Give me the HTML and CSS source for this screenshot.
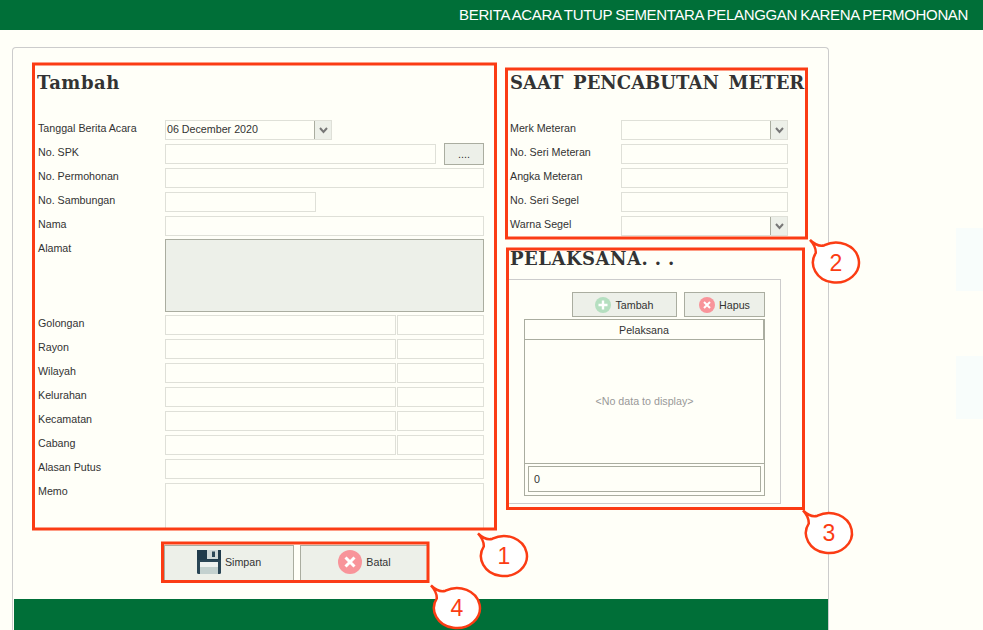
FILE: index.html
```html
<!DOCTYPE html>
<html lang="en">
<head>
  <meta charset="UTF-8" />
  <title>Berita Acara Tutup Sementara</title>
  <link rel="stylesheet" href="styles.css">
</head>
<body>

  <svg class="defs" width="0" height="0">
    <symbol id="icon-add" viewBox="0 0 16 16">
      <circle cx="8" cy="8" r="8" fill="#b5dfc0"/>
      <path d="M8 3.5v9M3.5 8h9" stroke="#fff" stroke-width="2.4"/>
    </symbol>
    <symbol id="icon-del" viewBox="0 0 16 16">
      <circle cx="8" cy="8" r="8" fill="#f8949a"/>
      <path d="M5 5l6 6M11 5l-6 6" stroke="#fff" stroke-width="2"/>
    </symbol>
    <symbol id="icon-arrow" viewBox="0 0 9 7">
      <path d="M1 1l3.5 4L8 1" fill="none" stroke="#777" stroke-width="2"/>
    </symbol>
    <symbol id="callout" viewBox="-30 -26 56 50" overflow="visible">
      <path d="M-26 -22.5Q-18 -15 -11.5 -17.3A23 20 0 1 1 -20.2 -9.6Q-20 -16 -26 -22.5Z" fill="#fff" stroke="#fb3c14" stroke-width="2.5"/>
    </symbol>
  </svg>

  <div class="topbar">BERITA ACARA TUTUP SEMENTARA PELANGGAN KARENA PERMOHONAN</div>

  <div class="panel">
    <div class="columns">

      <div class="col-left">
        <h2 class="title">Tambah</h2>
        <div class="row"><label>Tanggal Berita Acara</label>
          <div class="field combo w-date"><span class="value">06 December 2020</span><span class="arrow"><svg width="9" height="7"><use href="#icon-arrow"/></svg></span></div>
        </div>
        <div class="row"><label>No. SPK</label>
          <div class="field w-spk"></div>
          <button class="btn btn-dots">....</button>
        </div>
        <div class="row"><label>No. Permohonan</label><div class="field grow"></div></div>
        <div class="row"><label>No. Sambungan</label><div class="field w-samb"></div></div>
        <div class="row"><label>Nama</label><div class="field grow"></div></div>
        <div class="row row-alamat"><label>Alamat</label><div class="field grow readonly"></div></div>
        <div class="row"><label>Golongan</label><div class="field w-code"></div><div class="field w-name"></div></div>
        <div class="row"><label>Rayon</label><div class="field w-code"></div><div class="field w-name"></div></div>
        <div class="row"><label>Wilayah</label><div class="field w-code"></div><div class="field w-name"></div></div>
        <div class="row"><label>Kelurahan</label><div class="field w-code"></div><div class="field w-name"></div></div>
        <div class="row"><label>Kecamatan</label><div class="field w-code"></div><div class="field w-name"></div></div>
        <div class="row"><label>Cabang</label><div class="field w-code"></div><div class="field w-name"></div></div>
        <div class="row"><label>Alasan Putus</label><div class="field grow"></div></div>
        <div class="row row-memo"><label>Memo</label><div class="field grow"></div></div>
      </div>

      <div class="col-right">
        <h2 class="title title-wide">SAAT PENCABUTAN METER</h2>
        <div class="row row-r"><label>Merk Meteran</label>
          <div class="field combo w-r"><span class="value"></span><span class="arrow"><svg width="9" height="7"><use href="#icon-arrow"/></svg></span></div>
        </div>
        <div class="row row-r"><label>No. Seri Meteran</label><div class="field w-r"></div></div>
        <div class="row row-r"><label>Angka Meteran</label><div class="field w-r"></div></div>
        <div class="row row-r"><label>No. Seri Segel</label><div class="field w-r"></div></div>
        <div class="row row-r"><label>Warna Segel</label>
          <div class="field combo w-r"><span class="value"></span><span class="arrow"><svg width="9" height="7"><use href="#icon-arrow"/></svg></span></div>
        </div>

        <h2 class="title title-sub">PELAKSANA<span class="dots">...</span></h2>
        <div class="group">
          <div class="toolbar">
            <button class="btn btn-tambah"><svg width="16" height="16"><use href="#icon-add"/></svg>Tambah</button>
            <button class="btn btn-hapus"><svg width="16" height="16"><use href="#icon-del"/></svg>Hapus</button>
          </div>
          <div class="grid">
            <div class="grid-head">Pelaksana</div>
            <div class="grid-body">&lt;No data to display&gt;</div>
            <div class="grid-foot"><div class="grid-total">0</div></div>
          </div>
        </div>
      </div>

    </div>

    <div class="actions">
      <button class="btn btn-big btn-simpan">
        <svg width="24" height="24" viewBox="0 0 24 24">
          <rect width="24" height="24" rx="1.5" fill="#2a4656"/>
          <path d="M0 0h24v10H0z" fill="#1f3a4b"/>
          <rect x="10" y="0" width="11" height="9" fill="#cfd8d8"/>
          <rect x="15" y="1.500" width="3" height="5.500" fill="#2a4656"/>
          <rect x="3" y="12" width="18" height="5" fill="#eef2f0"/>
          <rect x="3" y="17" width="18" height="7" fill="#c3d1cf"/>
        </svg>Simpan
      </button>
      <button class="btn btn-big btn-batal"><svg width="24" height="24"><use href="#icon-del"/></svg>Batal</button>
    </div>

    <div class="footer"></div>
  </div>

  <div class="patch patch-a"></div>
  <div class="patch patch-b"></div>

  <!-- annotations drawn over the screenshot -->
  <svg class="notes" width="983" height="630">
    <rect class="mark" x="33.500" y="64" width="462" height="465"/>
    <rect class="mark" x="506.500" y="69" width="300" height="169"/>
    <rect class="mark" x="507.500" y="249" width="296" height="259.500"/>
    <rect class="mark" x="162.500" y="543" width="265.500" height="38.500"/>
    <g transform="translate(504 556)"><use href="#callout" x="-30" y="-26" width="56" height="50"/><text class="num" y="8">1</text></g>
    <g transform="translate(836 262.500)"><use href="#callout" x="-30" y="-26" width="56" height="50"/><text class="num" y="8">2</text></g>
    <g transform="translate(829 533)"><use href="#callout" x="-30" y="-26" width="56" height="50"/><text class="num" y="8">3</text></g>
    <g transform="translate(457 608)"><use href="#callout" x="-30" y="-26" width="56" height="50"/><text class="num" y="8">4</text></g>
  </svg>

</body>
</html>
```

FILE: styles.css
```css
:root {
  --bg: #fffff8;
  --green: #006f38;
  --line: #dfe0d8;
  --line-dark: #aaada0;
  --fill: #edf0e9;
  --text: #333;
}

html, body {
  height: 630px;
  overflow: hidden;
}

body {
  margin: 0;
  background: var(--bg);
  color: var(--text);
  font-family: 'Liberation Sans', Arial, sans-serif;
  font-size: 10.7px;
  position: relative;
}

.defs {
  position: absolute;
}

.topbar {
  height: 30px;
  line-height: 29px;
  padding-right: 15px;
  background: var(--green);
  color: #fff;
  font-size: 15px;
  letter-spacing: -0.35px;
  word-spacing: -0.5px;
  text-align: right;
}

.panel {
  margin: 17px 0 0 12px;
  width: 815px;
  height: 583px;
  border: 1px solid #ccc;
  border-bottom: none;
  border-radius: 4px 4px 0 0;
}

.columns {
  display: flex;
  padding: 22px 0 0 24px;
}

.col-left {
  width: 447px;
  height: 458px;
  overflow: hidden;
  margin-right: 26px;
}

.col-right {
  width: 300px;
}

.title {
  margin: 0 0 26px;
  height: 24px;
  line-height: 25px;
  font-family: 'DejaVu Serif', 'Liberation Serif', serif;
  font-size: 18px;
  font-weight: bold;
  letter-spacing: 0.5px;
  color: var(--text);
}

.title-wide {
  white-space: nowrap;
  letter-spacing: 0;
  word-spacing: 3.5px;
}

.title-sub {
  margin: 12px 0 9px;
  height: 22px;
  line-height: 22px;
}

.dots {
  letter-spacing: 7px;
}

.row {
  display: flex;
  height: 20px;
  margin-bottom: 4px;
}

.row label {
  width: 128px;
  padding-left: 1px;
  line-height: 17px;
  flex: none;
  box-sizing: border-box;
}

.row-r label {
  width: 111px;
  padding-left: 0;
}

.row-alamat {
  height: 73px;
  margin: -1px 0 3px;
}

.row-alamat label {
  padding-top: 1px;
}

.row-memo {
  height: 60px;
}

.field {
  box-sizing: border-box;
  border: 1px solid var(--line);
  height: 100%;
  flex: none;
}

.grow {
  flex: 1;
}

.readonly {
  background: var(--fill);
  border-color: var(--line-dark);
}

.w-date { width: 167px; }
.w-spk { width: 271px; }
.w-samb { width: 151px; }
.w-code { width: 231px; margin-right: 1px; }
.w-name { width: 87px; }
.w-r { width: 167px; }

.combo {
  display: flex;
}

.value {
  flex: 1;
  padding-left: 1px;
  line-height: 16px;
}

.arrow {
  display: flex;
  align-items: center;
  justify-content: center;
  width: 16px;
  background: var(--fill);
  border-left: 1px solid var(--line-dark);
}

.btn {
  display: flex;
  align-items: center;
  justify-content: center;
  box-sizing: border-box;
  margin: 0;
  padding: 0;
  background: var(--fill);
  border: 1px solid var(--line-dark);
  color: var(--text);
  font-family: inherit;
  font-size: 10.7px;
}

.btn-dots {
  width: 41px;
  height: 22px;
  margin: -1px 0 0 8px;
}

.group {
  box-sizing: border-box;
  width: 273px;
  height: 225px;
  margin-left: -2px;
  padding: 12px 15px 0;
  border: 1px solid #ccc;
}

.toolbar {
  display: flex;
  justify-content: flex-end;
  gap: 7px;
  margin-bottom: 2px;
}

.toolbar .btn {
  height: 25px;
  gap: 4px;
}

.btn-tambah { width: 105px; }
.btn-hapus { width: 81px; }

.grid {
  box-sizing: border-box;
  display: flex;
  flex-direction: column;
  height: 177px;
  border: 1px solid var(--line-dark);
}

.grid-head {
  box-sizing: border-box;
  height: 20px;
  line-height: 20px;
  text-align: center;
  border-bottom: 1px solid var(--line-dark);
  border-right: 1px solid var(--line-dark);
  flex: none;
}

.grid-body {
  flex: 1;
  display: flex;
  align-items: center;
  justify-content: center;
  padding-bottom: 1px;
  color: #999;
}

.grid-foot {
  flex: none;
  height: 32px;
  box-sizing: border-box;
  padding: 2px 3px 0;
  border-top: 1px solid var(--line-dark);
}

.grid-total {
  box-sizing: border-box;
  height: 26px;
  line-height: 24px;
  padding-left: 5px;
  border: 1px solid var(--line-dark);
}

.actions {
  display: flex;
  gap: 6px;
  margin: 17px 0 18px 151px;
}

.btn-big {
  height: 36px;
  gap: 4px;
  padding-bottom: 2px;
}

.btn-simpan { width: 130px; }
.btn-batal { width: 128px; padding-left: 1px; }

.footer {
  height: 31px;
  margin: 0 0 0 1px;
  background: var(--green);
}

.patch {
  position: absolute;
  left: 956px;
  width: 27px;
  height: 63px;
  background: #f8fdfb;
}

.patch-a { top: 228px; }
.patch-b { top: 356px; }

.notes {
  position: absolute;
  left: 0;
  top: 0;
  pointer-events: none;
}

.mark {
  fill: none;
  stroke: #fb3c14;
  stroke-width: 3;
}

.num {
  font-family: 'Liberation Sans', Arial, sans-serif;
  font-size: 23px;
  fill: #fb3c14;
  text-anchor: middle;
}
```
